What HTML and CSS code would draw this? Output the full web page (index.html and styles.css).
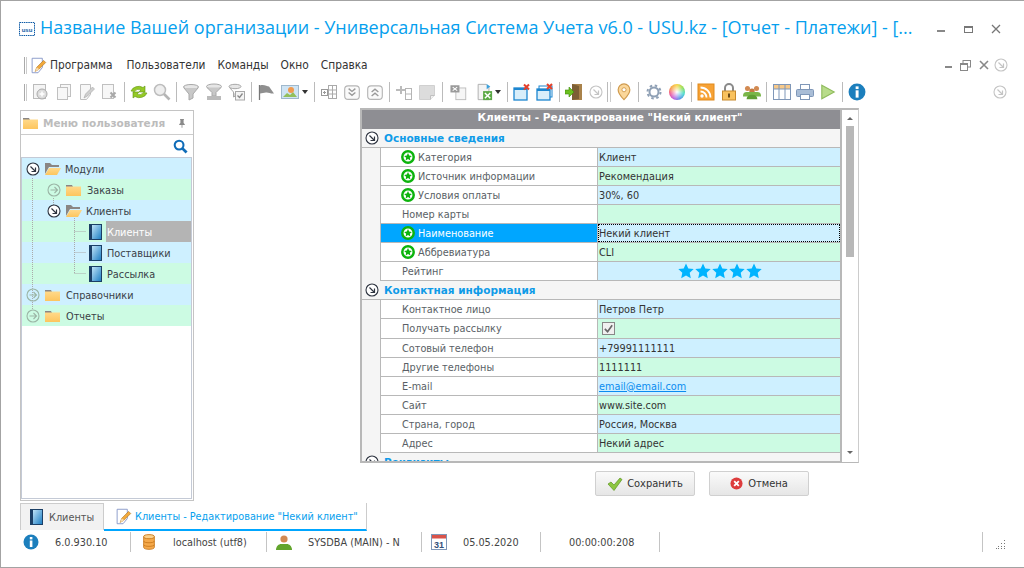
FILE: index.html
```html
<!DOCTYPE html>
<html lang="ru">
<head>
    <meta charset="UTF-8">
    <title>USU</title>
    <link rel="stylesheet" href="styles.css">
</head>
<body>

<svg class="sprite" xmlns="http://www.w3.org/2000/svg">
    <defs>
        <linearGradient id="bookFill" x1="0" y1="0" x2="1" y2="1"><stop offset="0" stop-color="#bfe3f7"/><stop offset="1" stop-color="#1f7fc4"/></linearGradient>
        <linearGradient id="folderFill" x1="0" y1="0" x2="0" y2="1"><stop offset="0" stop-color="#ffd98a"/><stop offset="1" stop-color="#fdc55e"/></linearGradient>
    </defs>
    <symbol id="i-edit" viewBox="0 0 20 20"><path d="M2.500 1.500h12v11l-5 6h-7z" fill="#fff" stroke="#7d8fc4"/><path d="M6 17l2-5 8-8 2.500 2.500-8 8z" fill="#f2a93b" stroke="#a9701c" stroke-width=".7"/><path d="M6 17l2-5 3 2.500z" fill="#f6dcae"/></symbol>
    <symbol id="i-open" viewBox="0 0 16 13"><path d="M0 12V1h5l2 2h7v2H4z" fill="#8a8684"/><path d="M0 13l4-7h12l-4 7z" fill="url(#folderFill)"/></symbol>
    <symbol id="i-folder" viewBox="0 0 15 12"><path d="M0 3V1h6l1 2z" fill="#8a8684"/><rect y="2.500" width="15" height="9.500" fill="url(#folderFill)"/></symbol>
    <symbol id="i-book" viewBox="0 0 13 16"><rect width="13" height="16" fill="#1b3f66"/><rect x="3" y="1" width="9" height="14" fill="url(#bookFill)"/></symbol>
    <symbol id="i-go" viewBox="0 0 14 14"><circle cx="7" cy="7" r="6" fill="#fff" stroke="currentColor" stroke-width="1.100"/><path d="M4.500 4.500l5 5M9.500 5.500v4h-4" fill="none" stroke="currentColor" stroke-width="1.200"/></symbol>
    <symbol id="i-right" viewBox="0 0 14 14"><circle cx="7" cy="7" r="6" fill="none" stroke="currentColor" stroke-width="1.100"/><path d="M3.500 7h7M7.500 4l3 3-3 3" fill="none" stroke="currentColor" stroke-width="1.100"/></symbol>
    <symbol id="i-req" viewBox="0 0 13 13"><circle cx="6.500" cy="6.500" r="5.300" fill="#fff" stroke="#0cb30c" stroke-width="2.300"/><path d="M6.500 2.800l1.100 2.400 2.500.3-1.900 1.700.5 2.500-2.200-1.300-2.200 1.300.5-2.500-1.900-1.700 2.500-.3z" fill="#0cb30c"/></symbol>
    <symbol id="i-star" viewBox="0 0 16 16"><path d="M8 .5l2.300 5 5.400.6-4 3.700 1.100 5.400L8 12.500l-4.800 2.700 1.100-5.400-4-3.700 5.400-.6z" fill="#00b4ff"/></symbol>
    <symbol id="i-search" viewBox="0 0 16 16"><circle cx="6.500" cy="6.500" r="4.700" fill="none" stroke="#0f6cb8" stroke-width="2.200"/><path d="M10 10l4.500 4.500" stroke="#0f6cb8" stroke-width="3"/></symbol>
    <symbol id="i-pin" viewBox="0 0 10 12"><path d="M2.500 1h5v1H7v4l1.500 1.500v1H5.500V12h-1V8.500h-3v-1L3 6V2h-.5z" fill="#8a8a8a"/></symbol>
    <symbol id="i-info" viewBox="0 0 16 16"><circle cx="8" cy="8" r="7.500" fill="#1c7fbd"/><rect x="6.800" y="3" width="2.600" height="2.400" fill="#fff"/><rect x="6.800" y="6.500" width="2.600" height="6.500" fill="#fff"/></symbol>

    <symbol id="t-add" viewBox="0 0 18 18"><rect x="1.500" y="1.500" width="12" height="14" fill="#f4f4f4" stroke="#bbb"/><circle cx="10" cy="11" r="5" fill="#ddd" stroke="#aaa"/><path d="M7.500 11h5M10 8.500v5" stroke="#fff" stroke-width="1.500"/></symbol>
    <symbol id="t-copy" viewBox="0 0 18 18"><rect x="5.500" y="1.500" width="10" height="12" fill="#f7f7f7" stroke="#c0c0c0"/><rect x="2.500" y="4.500" width="10" height="12" fill="#f7f7f7" stroke="#c0c0c0"/></symbol>
    <symbol id="t-edit" viewBox="0 0 18 18"><path d="M2.500 1.500h10v10l-4 5h-6z" fill="#f7f7f7" stroke="#c0c0c0"/><path d="M6 15l1.500-4 7-7 2 2-7 7z" fill="#cfcfcf" stroke="#a8a8a8" stroke-width=".6"/></symbol>
    <symbol id="t-del" viewBox="0 0 18 18"><rect x="1.500" y="1.500" width="11" height="14" fill="#f7f7f7" stroke="#c0c0c0"/><path d="M9.500 9.500l5 5M14.500 9.500l-5 5" stroke="#a8a8a8" stroke-width="2"/></symbol>
    <symbol id="t-refresh" viewBox="0 0 18 18"><path d="M1 8a8 7 0 0 1 12-3.500L15 3v6H9l2-2A5 4.500 0 0 0 4.500 8.500z" fill="#94c926" stroke="#5f9510" stroke-width=".6"/><path d="M17 10a8 7 0 0 1-12 3.500L3 15V9h6l-2 2a5 4.500 0 0 0 6.500-1.500z" fill="#94c926" stroke="#5f9510" stroke-width=".6"/></symbol>
    <symbol id="t-find" viewBox="0 0 18 18"><circle cx="7" cy="7" r="5.500" fill="#eee" stroke="#bdbdbd" stroke-width="1.500"/><path d="M11 11l5.500 5.500" stroke="#b5b5b5" stroke-width="2.600"/></symbol>
    <symbol id="t-funnel" viewBox="0 0 18 18"><ellipse cx="9" cy="4" rx="7.500" ry="2.500" fill="#e6e6e6" stroke="#a8a8a8"/><path d="M2 5l5 6v6l4-2v-4l5-6" fill="#c8c8c8" stroke="#a8a8a8"/></symbol>
    <symbol id="t-fsum" viewBox="0 0 18 18"><ellipse cx="9" cy="3.500" rx="7.500" ry="2.500" fill="#e6e6e6" stroke="#a8a8a8"/><path d="M2 4.500l5 5V13h4V9.500l5-5" fill="#c8c8c8" stroke="#a8a8a8"/><rect x="2" y="13" width="14" height="4" fill="#bbb"/></symbol>
    <symbol id="t-fcheck" viewBox="0 0 18 18"><ellipse cx="7" cy="3.500" rx="6" ry="2.200" fill="#e6e6e6" stroke="#a8a8a8"/><path d="M1.500 4.500l4 4.500v5l3-1.500" fill="#d0d0d0" stroke="#a8a8a8"/><rect x="7.500" y="8.500" width="9" height="8.500" fill="#f4f4f4" stroke="#a8a8a8"/><path d="M9.500 12.500l2 2 3-4" fill="none" stroke="#888" stroke-width="1.300"/></symbol>
    <symbol id="t-flag" viewBox="0 0 18 18"><path d="M1.500 2v15" stroke="#777" stroke-width="1.300"/><path d="M2 2.500c4-1.500 7 1 9 1l5 7c-3 .5-6-1.500-8-1l-6 1z" fill="#8f8f8f"/></symbol>
    <symbol id="t-image" viewBox="0 0 18 16"><rect x=".5" y="1.500" width="17" height="13" fill="#cfe4f4" stroke="#9fb8cc"/><path d="M2 13l4-4 3 2 3-3 4 5z" fill="#92bf5c"/><circle cx="10" cy="6" r="3" fill="#f09a50"/></symbol>
    <symbol id="t-cols" viewBox="0 0 18 18"><rect x="8.500" y="2.500" width="8" height="13" fill="none" stroke="#aaa"/><path d="M8.500 7h8M8.500 11h8M12.500 2.500v13" stroke="#aaa"/><rect x="1.500" y="6.500" width="6" height="6" fill="#fff" stroke="#999"/><path d="M3 9.500h3M4.500 8v3" stroke="#999"/></symbol>
    <symbol id="t-down" viewBox="0 0 16 16"><rect x="1.500" y="2.500" width="13" height="12" rx="3" fill="#fafafa" stroke="#b5b5b5"/><path d="M5 5l3 2.500L11 5M5 8.500L8 11l3-2.500" fill="none" stroke="#999" stroke-width="1.200"/></symbol>
    <symbol id="t-up" viewBox="0 0 16 16"><rect x="1.500" y="2.500" width="13" height="12" rx="3" fill="#fafafa" stroke="#b5b5b5"/><path d="M5 8l3-2.500L11 8M5 11.500L8 9l3 2.500" fill="none" stroke="#999" stroke-width="1.200"/></symbol>
    <symbol id="t-plus" viewBox="0 0 18 18"><path d="M1 6h4V3h2v3h4v2H7v3H5V8H1z" fill="#bbb"/><rect x="10.500" y="5.500" width="6" height="11" fill="#fff" stroke="#b5b5b5"/><path d="M10.500 11h6" stroke="#b5b5b5"/></symbol>
    <symbol id="t-note" viewBox="0 0 18 18"><path d="M1.500 2.500h15v10l-4 4h-11z" fill="#dcdcdc" stroke="#d0d0d0"/><path d="M12.500 16.500v-4h4" fill="#f0f0f0" stroke="#c0c0c0"/></symbol>
    <symbol id="t-xdoc" viewBox="0 0 20 18"><rect x="6.500" y="4.500" width="11" height="13" fill="#f6f6f6" stroke="#bbb"/><rect x=".5" y="1.500" width="10" height="8" fill="#9a9a9a"/><path d="M3 3.500l5 4M8 3.500l-5 4" stroke="#fff" stroke-width="1.200"/></symbol>
    <symbol id="t-excel" viewBox="0 0 20 20"><path d="M3.500 1.500h9l3 3v14h-12z" fill="#f4f4f4" stroke="#aaa"/><path d="M13 1l4 3-4 3z" fill="#3aa0dc"/><rect x="9" y="9" width="10" height="10" fill="#5aa845"/><path d="M11 11l6 6M17 11l-6 6" stroke="#fff" stroke-width="1.600"/></symbol>
    <symbol id="t-winx" viewBox="0 0 18 18"><rect x="1" y="5" width="13" height="12" fill="#d8eefa" stroke="#1c86d0" stroke-width="1.300"/><rect x="1" y="5" width="13" height="2" fill="#1c86d0"/><path d="M11 1.500l5 5M16 1.500l-5 5" stroke="#e5402a" stroke-width="2"/></symbol>
    <symbol id="t-win2" viewBox="0 0 18 18"><rect x="3" y="3" width="13" height="11" fill="#fff" stroke="#1c86d0"/><rect x="1" y="6" width="13" height="11" fill="#d8eefa" stroke="#1c86d0" stroke-width="1.300"/><rect x="1" y="6" width="13" height="2" fill="#1c86d0"/><path d="M11 1l5 5M16 1l-5 5" stroke="#e5402a" stroke-width="2"/></symbol>
    <symbol id="t-door" viewBox="0 0 18 18"><rect x="7" y="1" width="10" height="16" fill="#a9824a"/><path d="M7 1l7 2v13l-7 1z" fill="#7d5f35"/><path d="M0 7h4V4l5 5-5 5v-3H0z" fill="#6cc01f" stroke="#3d8a0c" stroke-width=".6"/></symbol>
    <symbol id="t-place" viewBox="0 0 18 20"><path d="M9 1a6.500 6.500 0 0 1 6.500 6.500C15.500 12 9 18.500 9 18.500S2.500 12 2.500 7.500A6.500 6.500 0 0 1 9 1z" fill="#fbd79a" stroke="#cf9a4d" stroke-width="1.300"/><circle cx="9" cy="7.500" r="2.300" fill="#fff" stroke="#cf9a4d"/></symbol>
    <symbol id="t-gear" viewBox="0 0 18 18"><circle cx="9" cy="9" r="4.500" fill="#fff" stroke="#8fa0b5" stroke-width="2"/><circle cx="9" cy="9" r="6.500" fill="none" stroke="#8fa0b5" stroke-width="2" stroke-dasharray="2.500 2.600"/></symbol>
    <symbol id="t-rss" viewBox="0 0 18 18"><rect x="1" y="1" width="16" height="16" fill="#f7a235" stroke="#e08a1c"/><circle cx="5" cy="13" r="1.700" fill="#fff"/><path d="M3.500 8.500a6 6 0 0 1 6 6M3.500 4.500a10 10 0 0 1 10 10" fill="none" stroke="#fff" stroke-width="1.800"/></symbol>
    <symbol id="t-lock" viewBox="0 0 16 18"><path d="M4 8V5a4 4 0 0 1 8 0v3" fill="none" stroke="#8a8a8a" stroke-width="2"/><rect x="1.500" y="8" width="13" height="9" fill="#f9c25e" stroke="#c88a2c"/><rect x="7" y="10.500" width="2" height="4" fill="#6b4a18"/></symbol>
    <symbol id="t-users" viewBox="0 0 20 18"><circle cx="5" cy="5" r="2.800" fill="#d28a52"/><circle cx="15" cy="5" r="2.800" fill="#d28a52"/><circle cx="10" cy="8" r="3" fill="#c57a42"/><path d="M0 13c0-3 2-4 4-4h12c2 0 4 1 4 4v1H0z" fill="#7ab648"/><path d="M4 17c0-3 2-5 6-5s6 2 6 5z" fill="#5f9e33"/></symbol>
    <symbol id="t-table" viewBox="0 0 18 16"><rect x=".5" y=".5" width="17" height="15" fill="#fff" stroke="#7f97b8"/><rect x="1" y="1" width="16" height="4" fill="#f7c98a"/><path d="M6 1v14M12 1v14M1 5h16" stroke="#7f97b8"/></symbol>
    <symbol id="t-print" viewBox="0 0 18 18"><rect x="4.500" y="1.500" width="9" height="6" fill="#fff" stroke="#7f97b8"/><rect x=".5" y="6.500" width="17" height="7" rx="1" fill="#a9bdd6" stroke="#7f97b8"/><rect x="4.500" y="11.500" width="9" height="5" fill="#fff" stroke="#7f97b8"/></symbol>
    <symbol id="t-play" viewBox="0 0 16 16"><path d="M2.500 2l11 6-11 6z" fill="#b8dc8a" stroke="#8fbb5c"/></symbol>

    <symbol id="s-db" viewBox="0 0 14 18"><path d="M1 3v12c0 3 12 3 12 0V3z" fill="#f5a94b" stroke="#c9791c"/><ellipse cx="7" cy="3" rx="6" ry="2.300" fill="#fbd08a" stroke="#c9791c"/><path d="M1 8c0 2.500 12 2.500 12 0M1 12c0 2.500 12 2.500 12 0" fill="none" stroke="#c9791c"/></symbol>
    <symbol id="s-user" viewBox="0 0 16 16"><circle cx="8" cy="5" r="3.600" fill="#d28a52"/><path d="M0 16c0-4 3-6 5-6h6c2 0 5 2 5 6z" fill="#62a52d"/></symbol>
    <symbol id="b-ok" viewBox="0 0 16 14"><path d="M1 7l3-2 3 3 6-7 2 1.500L7 13.500z" fill="#8cc63f" stroke="#5c9420" stroke-width=".7"/></symbol>
    <symbol id="b-no" viewBox="0 0 14 14"><circle cx="7" cy="7" r="6.500" fill="#dd3c3c"/><path d="M4.500 4.500l5 5M9.500 4.500l-5 5" stroke="#fff" stroke-width="2"/></symbol>
</svg>

<div class="window">

    <header class="titlebar">
        <svg class="logo" viewBox="0 0 16 14"><rect x=".5" y=".5" width="15" height="13" fill="#fff" stroke="#0c5aa6" stroke-dasharray="1.500 .7"/><text x="8" y="9.500" text-anchor="middle" class="logo-text">usu</text></svg>
        <span class="title">Название Вашей организации - Универсальная Система Учета v6.0 - USU.kz - [Отчет - Платежи] - [...</span>
        <div class="win-buttons">
            <span class="win-min"></span>
            <span class="win-max"></span>
            <svg class="win-close" viewBox="0 0 10 10"><path d="M1 1l8 8M9 1l-8 8" stroke="#777" stroke-width="1.300"/></svg>
        </div>
    </header>

    <nav class="menubar">
        <span class="grip"></span>
        <svg class="menu-icon"><use href="#i-edit"/></svg>
        <a>Программа</a>
        <a>Пользователи</a>
        <a>Команды</a>
        <a>Окно</a>
        <a>Справка</a>
        <div class="mdi-buttons">
            <span class="mdi-min"></span>
            <svg class="mdi-restore" viewBox="0 0 11 11"><rect x="3" y=".5" width="7.500" height="6.500" fill="none" stroke="#888"/><rect x=".5" y="3.500" width="7" height="7" fill="#fff" stroke="#888"/><path d="M1 4.500h6" stroke="#888"/></svg>
            <svg class="mdi-close" viewBox="0 0 10 10"><path d="M1 1l8 8M9 1l-8 8" stroke="#888" stroke-width="1.600"/></svg>
            <svg class="ico14 faint"><use href="#i-go"/></svg>
        </div>
    </nav>

    <div class="toolbar">
        <span class="grip"></span>
        <span class="tool"><svg><use href="#t-add"/></svg></span>
        <span class="tool"><svg><use href="#t-copy"/></svg></span>
        <span class="tool"><svg><use href="#t-edit"/></svg></span>
        <span class="tool"><svg><use href="#t-del"/></svg></span>
        <span class="sep"></span>
        <span class="tool"><svg><use href="#t-refresh"/></svg></span>
        <span class="tool"><svg><use href="#t-find"/></svg></span>
        <span class="sep"></span>
        <span class="tool"><svg><use href="#t-funnel"/></svg></span>
        <span class="tool"><svg><use href="#t-fsum"/></svg></span>
        <span class="tool"><svg><use href="#t-fcheck"/></svg></span>
        <span class="sep wide"></span>
        <span class="tool"><svg><use href="#t-flag"/></svg></span>
        <span class="tool"><svg><use href="#t-image"/></svg></span>
        <span class="drop"></span>
        <span class="sep"></span>
        <span class="tool"><svg><use href="#t-cols"/></svg></span>
        <span class="tool"><svg><use href="#t-down"/></svg></span>
        <span class="tool"><svg><use href="#t-up"/></svg></span>
        <span class="sep"></span>
        <span class="tool"><svg><use href="#t-plus"/></svg></span>
        <span class="tool"><svg><use href="#t-note"/></svg></span>
        <span class="sep wider"></span>
        <span class="tool"><svg><use href="#t-xdoc"/></svg></span>
        <span class="tool tool-excel"><svg><use href="#t-excel"/></svg></span>
        <span class="drop"></span>
        <span class="sep"></span>
        <span class="tool"><svg><use href="#t-winx"/></svg></span>
        <span class="tool"><svg><use href="#t-win2"/></svg></span>
        <span class="sep"></span>
        <span class="tool"><svg><use href="#t-door"/></svg></span>
        <span class="tool tool-go"><svg class="faint"><use href="#i-go"/></svg></span>
        <span class="sep double"></span>
        <span class="tool"><svg><use href="#t-place"/></svg></span>
        <span class="sep wide"></span>
        <span class="tool"><svg><use href="#t-gear"/></svg></span>
        <span class="tool"><span class="wheel"></span></span>
        <span class="sep"></span>
        <span class="tool"><svg><use href="#t-rss"/></svg></span>
        <span class="tool"><svg><use href="#t-lock"/></svg></span>
        <span class="tool"><svg><use href="#t-users"/></svg></span>
        <span class="sep wide"></span>
        <span class="tool"><svg><use href="#t-table"/></svg></span>
        <span class="tool"><svg><use href="#t-print"/></svg></span>
        <span class="tool"><svg><use href="#t-play"/></svg></span>
        <span class="sep"></span>
        <span class="tool"><svg><use href="#i-info"/></svg></span>
        <span class="tool tool-end"><svg class="faint"><use href="#i-go"/></svg></span>
    </div>

    <main class="content">

        <aside class="side-panel">
            <div class="side-head">
                <svg class="ico-folder"><use href="#i-folder"/></svg>
                <strong>Меню пользователя</strong>
                <svg class="ico-pin"><use href="#i-pin"/></svg>
            </div>
            <div class="side-search"><svg><use href="#i-search"/></svg></div>
            <div class="tree">
                <svg class="tree-lines">
                    <path d="M10.500 20V152M31.500 40v10M52.500 60V116M52.500 73.500h11M52.500 94.500h11M52.500 115.500h11"/>
                </svg>
                <div class="node blue lvl0"><svg class="ico14 dark"><use href="#i-go"/></svg><svg class="ico-open"><use href="#i-open"/></svg><span>Модули</span></div>
                <div class="node green lvl1"><svg class="ico14 pale"><use href="#i-right"/></svg><svg class="ico-folder"><use href="#i-folder"/></svg><span>Заказы</span></div>
                <div class="node blue lvl1"><svg class="ico14 dark"><use href="#i-go"/></svg><svg class="ico-open"><use href="#i-open"/></svg><span>Клиенты</span></div>
                <div class="node green lvl2"><svg class="ico-book"><use href="#i-book"/></svg><span class="selected">Клиенты</span></div>
                <div class="node blue lvl2"><svg class="ico-book"><use href="#i-book"/></svg><span>Поставщики</span></div>
                <div class="node green lvl2"><svg class="ico-book"><use href="#i-book"/></svg><span>Рассылка</span></div>
                <div class="node blue lvl0"><svg class="ico14 pale"><use href="#i-right"/></svg><svg class="ico-folder"><use href="#i-folder"/></svg><span>Справочники</span></div>
                <div class="node green lvl0"><svg class="ico14 pale"><use href="#i-right"/></svg><svg class="ico-folder"><use href="#i-folder"/></svg><span>Отчеты</span></div>
            </div>
        </aside>

        <section class="editor">
            <div class="form">
                <div class="grid">
                    <div class="grid-title">Клиенты - Редактирование "Некий клиент"</div>

                    <div class="group"><svg class="ico14 dark"><use href="#i-go"/></svg>Основные сведения</div>
                    <div class="row"><div class="label req"><svg><use href="#i-req"/></svg>Категория</div><div class="value blue">Клиент</div></div>
                    <div class="row"><div class="label req"><svg><use href="#i-req"/></svg>Источник информации</div><div class="value green">Рекомендация</div></div>
                    <div class="row"><div class="label req"><svg><use href="#i-req"/></svg>Условия оплаты</div><div class="value blue">30%, 60</div></div>
                    <div class="row"><div class="label">Номер карты</div><div class="value green"></div></div>
                    <div class="row"><div class="label req active"><svg><use href="#i-req"/></svg>Наименование</div><div class="value blue focused">Некий клиент</div></div>
                    <div class="row"><div class="label req"><svg><use href="#i-req"/></svg>Аббревиатура</div><div class="value green">CLI</div></div>
                    <div class="row"><div class="label">Рейтинг</div><div class="value blue stars"><svg><use href="#i-star"/></svg><svg><use href="#i-star"/></svg><svg><use href="#i-star"/></svg><svg><use href="#i-star"/></svg><svg><use href="#i-star"/></svg></div></div>

                    <div class="group"><svg class="ico14 dark"><use href="#i-go"/></svg>Контактная информация</div>
                    <div class="row"><div class="label">Контактное лицо</div><div class="value blue">Петров Петр</div></div>
                    <div class="row tall"><div class="label">Получать рассылку</div><div class="value green"><span class="check"><svg viewBox="0 0 12 12"><path d="M2 6.500l3 3 5-7" fill="none" stroke="#666" stroke-width="1.800"/></svg></span></div></div>
                    <div class="row"><div class="label">Сотовый телефон</div><div class="value blue">+79991111111</div></div>
                    <div class="row"><div class="label">Другие телефоны</div><div class="value green">1111111</div></div>
                    <div class="row"><div class="label">E-mail</div><div class="value blue"><a class="link">email@email.com</a></div></div>
                    <div class="row"><div class="label">Сайт</div><div class="value green">www.site.com</div></div>
                    <div class="row"><div class="label">Страна, город</div><div class="value blue">Россия, Москва</div></div>
                    <div class="row"><div class="label">Адрес</div><div class="value green">Некий адрес</div></div>
                    <div class="group"><svg class="ico14 dark"><use href="#i-go"/></svg>Реквизиты</div>
                </div>
                <div class="scrollbar">
                    <span class="arrow-up"></span>
                    <span class="thumb"></span>
                    <span class="arrow-down"></span>
                </div>
            </div>
            <div class="actions">
                <button class="btn"><svg class="ico-ok"><use href="#b-ok"/></svg>Сохранить</button>
                <button class="btn"><svg class="ico-no"><use href="#b-no"/></svg>Отмена</button>
            </div>
        </section>
    </main>

    <div class="tabs">
        <div class="tab"><svg class="ico-book"><use href="#i-book"/></svg>Клиенты</div>
        <div class="tab current"><svg class="tab-edit"><use href="#i-edit"/></svg>Клиенты - Редактирование "Некий клиент"</div>
    </div>

    <footer class="statusbar">
        <div class="cell cell-ver"><svg class="ico-status"><use href="#i-info"/></svg><span>6.0.930.10</span></div>
        <div class="cell cell-db"><svg class="ico-status"><use href="#s-db"/></svg><span>localhost (utf8)</span></div>
        <div class="cell cell-user"><svg class="ico-status"><use href="#s-user"/></svg><span>SYSDBA (MAIN) - N</span></div>
        <div class="cell cell-date"><svg class="ico-status" viewBox="0 0 16 16"><rect x=".5" y=".5" width="15" height="15" fill="#fff" stroke="#7f97b8"/><rect x="1" y="1" width="14" height="3.500" fill="#d9534a"/><text x="8" y="13.500" text-anchor="middle" class="cal-text">31</text></svg><span>05.05.2020</span></div>
        <div class="cell cell-time"><span>00:00:00:208</span></div>
        <div class="cell cell-fill"></div>
        <svg class="resize" viewBox="0 0 10 10"><path d="M8 1h1v1H8zM5 4h1v1H5zM8 4h1v1H8zM2 7h1v1H2zM5 7h1v1H5zM8 7h1v1H8zM0 9h1v1H0zM2 9h1v1H2zM5 9h1v1H5zM8 9h1v1H8z" fill="#777"/></svg>
    </footer>

</div>

</body>
</html>
```

FILE: styles.css
```css
* {
    box-sizing: border-box;
}
body {
    margin: 0;
    background-color: white;
    font-family: "DejaVu Sans Condensed", "Noto Sans", sans-serif;
    font-size: 10.8px;
    color: #3a3f47;
}
.sprite {
    position: absolute;
    width: 0;
    height: 0;
}
svg {
    display: block;
    flex: none;
}
.window {
    width: 1024px;
    height: 568px;
    border: 1px solid #a3a3a3;
    border-right: 0;
    padding-bottom: 14px;
    display: flex;
    flex-direction: column;
    overflow: hidden;
}

/* title */
.titlebar {
    height: 44px;
    display: flex;
    align-items: center;
    padding: 12px 0 0 18px;
    flex: none;
}
.logo {
    width: 16px;
    height: 14px;
    margin-right: 5px;
}
.logo-text {
    font-family: "Liberation Sans", sans-serif;
    font-size: 6px;
    font-weight: bold;
    fill: #0c5aa6;
}
.title {
    font-family: "Open Sans", sans-serif;
    font-size: 18px;
    color: #069fee;
    white-space: nowrap;
    width: 887px;
    margin-top: -4px;
}
.win-buttons {
    display: flex;
    align-items: center;
    margin-left: 10px;
}
.win-min {
    width: 8px;
    height: 2px;
    background-color: #888;
    margin: 4px 19px 0 0;
}
.win-max {
    width: 9px;
    height: 7px;
    border: 1px solid #777;
    border-top-width: 2px;
    margin-right: 18px;
}
.win-close {
    width: 10px;
    height: 10px;
}

/* menu */
.menubar {
    height: 24px;
    margin-top: 8px;
    display: flex;
    align-items: center;
    flex: none;
    padding-left: 23px;
}
.grip {
    width: 3px;
    height: 17px;
    border-left: 1px solid #aaa;
    border-right: 1px solid #ccc;
    flex: none;
}
.menu-icon {
    width: 17px;
    height: 17px;
    margin: 0 3px 0 3px;
}
.menubar a {
    font-size: 11.8px;
    color: #333;
    margin-right: 12px;
}
.menubar a:first-of-type {
    margin-right: 14px;
}
.mdi-buttons {
    margin-left: auto;
    display: flex;
    align-items: center;
    padding-right: 16px;
}
.mdi-min {
    width: 7px;
    height: 2px;
    background-color: #888;
    margin: 3px 8px 0 0;
}
.mdi-restore {
    width: 11px;
    height: 11px;
    margin-right: 8px;
}
.mdi-close {
    width: 10px;
    height: 10px;
    margin-right: 5px;
}
.ico14 {
    width: 14px;
    height: 14px;
}
.faint {
    color: #c4c4c4;
}
.dark {
    color: #2e3440;
}
.pale {
    color: #9bb5a5;
}

/* toolbar */
.toolbar {
    height: 24px;
    margin-top: 3px;
    padding-left: 23px;
    display: flex;
    align-items: center;
    flex: none;
}
.toolbar .grip {
    margin-right: 2px;
}
.tool {
    width: 23px;
    height: 22px;
    display: flex;
    align-items: center;
    justify-content: center;
    flex: none;
}
.tool svg {
    width: 18px;
    height: 18px;
}
.tool-go {
    width: 21px;
}
.tool-go svg {
    width: 14px;
    height: 14px;
}
.tool-excel {
    margin: 0 -1px 0 2px;
}
.tool-end {
    margin-left: auto;
    margin-right: 13px;
}
.tool-end svg {
    width: 14px;
    height: 14px;
}
.sep {
    width: 6px;
    height: 20px;
    flex: none;
    background: linear-gradient(#bbb, #bbb) center / 1px 100% no-repeat;
}
.sep.wide {
    width: 7px;
}
.sep.wider {
    width: 9px;
}
.sep.double {
    width: 6px;
    background: linear-gradient(#bbb, #bbb) 1px 0 / 1px 100% no-repeat, linear-gradient(#ccc, #ccc) 4px 0 / 1px 100% no-repeat;
}
.drop {
    width: 10px;
    height: 22px;
    flex: none;
    position: relative;
}
.drop::after {
    content: "";
    position: absolute;
    top: 9px;
    left: 1px;
    border: 3px solid transparent;
    border-top: 4px solid #333;
}
.wheel {
    width: 16px;
    height: 16px;
    border-radius: 50%;
    background: radial-gradient(circle, #fff 0, rgba(255, 255, 255, 0) 70%), conic-gradient(#f7d33c, #8fdc4a, #3cd8c8, #4a8fe8, #b85ae0, #f0508c, #f7a03c, #f7d33c);
}

/* left tree */
.content {
    flex: 1;
    display: flex;
    align-items: flex-start;
    padding: 6px 0 0 19px;
    min-height: 0;
}
.side-panel {
    width: 174px;
    height: 391px;
    border: 1px solid #c4c4c4;
    display: flex;
    flex-direction: column;
}
.side-head {
    height: 24px;
    display: flex;
    align-items: center;
    padding: 0 7px 0 2px;
    color: #bcbcbc;
    border-bottom: 1px solid #ccc;
    font-size: 11.5px;
}
.side-head strong {
    margin-left: 5px;
    font-family: "DejaVu Sans", sans-serif;
    font-size: 10.5px;
}
.ico-pin {
    width: 8px;
    height: 10px;
    margin-left: auto;
}
.ico-folder {
    width: 15px;
    height: 12px;
    flex: none;
}
.ico-open {
    width: 16px;
    height: 13px;
    flex: none;
}
.ico-book {
    width: 13px;
    height: 16px;
    flex: none;
}
.side-search {
    height: 22px;
    display: flex;
    align-items: center;
    justify-content: flex-end;
    padding-right: 5px;
}
.side-search svg {
    width: 15px;
    height: 15px;
}
.tree {
    flex: 1;
    margin: 0 1px 1px 0;
    border: 1px solid #c4cad6;
    position: relative;
}
.tree-lines {
    position: absolute;
    left: 0;
    top: 0;
    width: 100%;
    height: 200px;
    fill: none;
    stroke: #aaa;
    stroke-dasharray: 1 1;
    z-index: 1;
}
.node {
    height: 21px;
    display: flex;
    align-items: center;
    position: relative;
}
.node svg {
    position: relative;
    z-index: 2;
}
.blue {
    background-color: #cef0ff;
}
.green {
    background-color: #ccfbe3;
}
.node span {
    white-space: nowrap;
    padding-top: 1px;
}
.lvl0 {
    padding-left: 4px;
}
.lvl1 {
    padding-left: 25px;
}
.lvl2 {
    padding-left: 67px;
}
.lvl0 .ico14,
.lvl1 .ico14 {
    margin-right: 5px;
}
.lvl0 .ico-folder,
.lvl1 .ico-folder {
    margin-right: 6px;
}
.lvl0 .ico-open,
.lvl1 .ico-open {
    margin-right: 4px;
}
.lvl2 .ico-book {
    margin-right: 4px;
}
.node .selected {
    align-self: stretch;
    flex: 1;
    display: flex;
    align-items: center;
    background-color: #b4b4b4;
    color: white;
}
.lvl2 span {
    padding-left: 1px;
}

/* form */
.editor {
    margin-left: 166px;
    width: 499px;
    margin-top: -2px;
}
.form {
    height: 355px;
    display: flex;
    border: 1px solid #b8b8b8;
    border-top-width: 2px;
    border-left-width: 2px;
    border-right-color: #ccc;
}
.grid {
    width: 480px;
    overflow: hidden;
    background-color: #f5f5f5;
    border-right: 2px solid #b8b8b8;
    border-bottom: 1px solid #b8b8b8;
    flex: none;
}
.grid-title {
    height: 19px;
    background-color: #8e8e93;
    color: white;
    font-family: "DejaVu Sans", sans-serif;
    font-size: 10.5px;
    font-weight: bold;
    text-align: center;
    padding: 1px 0 0 18px;
    white-space: nowrap;
}
.group {
    height: 19px;
    display: flex;
    align-items: center;
    padding-left: 3px;
    color: #0f9be8;
    font-family: "DejaVu Sans", sans-serif;
    font-size: 10.5px;
    font-weight: bold;
    gap: 5px;
    border-bottom: 1px solid #b8b8b8;
}
.row {
    height: 19px;
    display: grid;
    grid-template-columns: 217px 1fr;
    margin-left: 18px;
    border-left: 1px solid #b8b8b8;
    border-bottom: 1px solid #b8b8b8;
}
.row.tall {
    height: 20px;
}
.label {
    background-color: white;
    display: flex;
    align-items: center;
    padding-left: 21px;
    color: #5a5f66;
    border-right: 1px solid #b8b8b8;
    white-space: nowrap;
}
.label.req {
    padding-left: 20px;
}
.label.req svg {
    width: 14px;
    height: 14px;
    margin-right: 3px;
}
.label.active {
    background-color: #00a6ff;
    color: white;
}
.value {
    display: flex;
    align-items: center;
    padding-left: 1px;
    color: #333;
    white-space: nowrap;
}
.value.focused {
    outline: 1px dotted #000;
    outline-offset: -1px;
}
.stars {
    justify-content: center;
    gap: 1px;
}
.stars svg {
    width: 16px;
    height: 16px;
}
.check {
    width: 13px;
    height: 13px;
    margin-left: 3px;
    border: 1px solid #888;
    background-color: #f0f0f0;
}
.check svg {
    width: 11px;
    height: 11px;
}
.link {
    color: #0a8cf0;
    text-decoration: underline;
}
.scrollbar {
    flex: 1;
    display: flex;
    flex-direction: column;
    align-items: center;
    padding-top: 6px;
}
.arrow-up {
    border: 3px solid transparent;
    border-bottom: 3px solid #666;
    margin-top: -2px;
}
.thumb {
    width: 8px;
    height: 131px;
    margin-top: 6px;
    background-color: #b8b8b8;
}
.arrow-down {
    margin-top: auto;
    margin-bottom: 5px;
    border: 3px solid transparent;
    border-top: 3px solid #666;
}
.actions {
    display: flex;
    gap: 14px;
    margin: 8px 0 0 235px;
}
.btn {
    width: 100px;
    height: 25px;
    display: flex;
    align-items: center;
    justify-content: center;
    border: 1px solid #d0d0d0;
    border-radius: 2px;
    background: linear-gradient(#fafafa, #e6e6e6);
    font-family: inherit;
    font-size: 11px;
    color: #333;
    padding: 0;
}
.ico-ok {
    width: 16px;
    height: 14px;
    margin-right: 4px;
}
.ico-no {
    width: 13px;
    height: 13px;
    margin-right: 5px;
}

/* tabs */
.tabs {
    height: 28px;
    flex: none;
    display: flex;
    padding-left: 19px;
}
.tab {
    height: 27px;
    width: 84px;
    display: flex;
    align-items: center;
    padding-left: 9px;
    border: 1px solid #ccc;
    border-bottom: 0;
    background-color: #f2f2f2;
    color: #555;
    gap: 6px;
    white-space: nowrap;
}
.tab.current {
    width: 263px;
    height: 28px;
    background-color: white;
    border-top: 0;
    border-left: 0;
    border-bottom: 2px solid #00a6ff;
    color: #069fee;
    padding-left: 11px;
    gap: 3px;
}
.tab-edit {
    width: 17px;
    height: 17px;
}

/* status */
.statusbar {
    height: 22px;
    display: flex;
    align-items: center;
    flex: none;
    padding-left: 22px;
    color: #444;
}
.cell {
    height: 20px;
    display: flex;
    align-items: center;
    border-right: 1px solid #c4c4c4;
    white-space: nowrap;
}
.ico-status {
    width: 16px;
    height: 16px;
    flex: none;
}
.cal-text {
    font-family: "Liberation Sans", sans-serif;
    font-size: 9px;
    font-weight: bold;
    fill: #33507a;
}
.cell-ver {
    width: 108px;
}
.cell-ver span {
    margin-left: 16px;
}
.cell-db {
    width: 136px;
    padding-left: 10px;
}
.cell-db span {
    margin-left: 16px;
}
.cell-user {
    width: 155px;
    padding-left: 9px;
}
.cell-user span {
    margin-left: 16px;
}
.cell-date {
    width: 119px;
    padding-left: 9px;
}
.cell-date span {
    margin-left: 16px;
}
.cell-time {
    width: 119px;
    padding-left: 28px;
}
.cell-fill {
    width: 323px;
}
.resize {
    width: 10px;
    height: 10px;
    margin: 4px 0 0 13px;
}
```
